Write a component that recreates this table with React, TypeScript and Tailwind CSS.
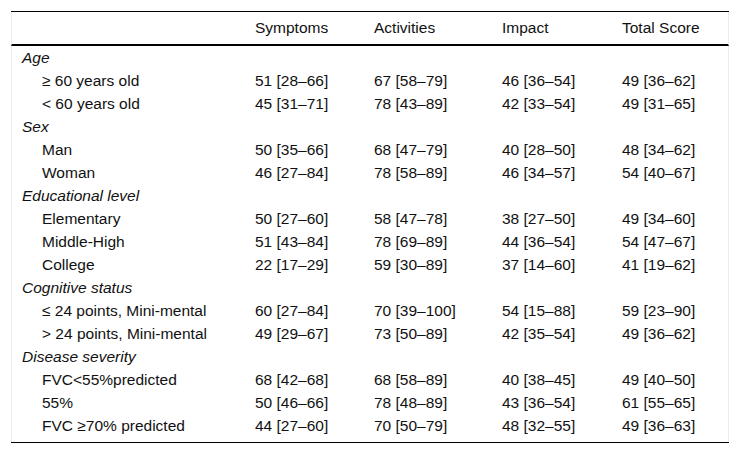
type Row = { label: string; group?: boolean; values?: string[] };

const rows: Row[] = [
  { label: 'Age', group: true },
  { label: '≥ 60 years old', values: ['51 [28–66]', '67 [58–79]', '46 [36–54]', '49 [36–62]'] },
  { label: '< 60 years old', values: ['45 [31–71]', '78 [43–89]', '42 [33–54]', '49 [31–65]'] },
  { label: 'Sex', group: true },
  { label: 'Man', values: ['50 [35–66]', '68 [47–79]', '40 [28–50]', '48 [34–62]'] },
  { label: 'Woman', values: ['46 [27–84]', '78 [58–89]', '46 [34–57]', '54 [40–67]'] },
  { label: 'Educational level', group: true },
  { label: 'Elementary', values: ['50 [27–60]', '58 [47–78]', '38 [27–50]', '49 [34–60]'] },
  { label: 'Middle-High', values: ['51 [43–84]', '78 [69–89]', '44 [36–54]', '54 [47–67]'] },
  { label: 'College', values: ['22 [17–29]', '59 [30–89]', '37 [14–60]', '41 [19–62]'] },
  { label: 'Cognitive status', group: true },
  { label: '≤ 24 points, Mini-mental', values: ['60 [27–84]', '70 [39–100]', '54 [15–88]', '59 [23–90]'] },
  { label: '> 24 points, Mini-mental', values: ['49 [29–67]', '73 [50–89]', '42 [35–54]', '49 [36–62]'] },
  { label: 'Disease severity', group: true },
  { label: 'FVC<55%predicted', values: ['68 [42–68]', '68 [58–89]', '40 [38–45]', '49 [40–50]'] },
  { label: '55%', values: ['50 [46–66]', '78 [48–89]', '43 [36–54]', '61 [55–65]'] },
  { label: 'FVC ≥70% predicted', values: ['44 [27–60]', '70 [50–79]', '48 [32–55]', '49 [36–63]'] },
];

const headers = ['Symptoms', 'Activities', 'Impact', 'Total Score'];
const gridCols = 'grid grid-cols-[232px_119px_128px_120px_119px]';

const App = () => {
  return (
    <div className="h-[453px] w-[740px] bg-white pt-[11px] pl-[11px] font-['Liberation_Sans',Arial,sans-serif] text-[15.5px] text-[#111]">
      <div className="w-[718px] border-t border-black border-b border-b-black">
        {/* header */}
        <div className={`${gridCols} h-[34px] items-center border-x border-x-[#ececec] border-b-2 border-b-black`}>
          <div />
          {headers.map((h) => (
            <div key={h} className="pl-[11px] leading-none">
              {h}
            </div>
          ))}
        </div>

        {/* body */}
        <div className="border-x border-x-[#ececec] pb-[5px]">
          {rows.map((r) => (
            <div key={r.label} className={`${gridCols} h-[23px] items-center leading-none`}>
              {r.group ? (
                <div className="pl-[10px] italic">{r.label}</div>
              ) : (
                <div className="pl-[30px]">{r.label}</div>
              )}
              {(r.values ?? ['', '', '', '']).map((v, i) => (
                <div key={i} className="pl-[11px]">
                  {v}
                </div>
              ))}
            </div>
          ))}
        </div>
      </div>
    </div>
  );
};

export default App;
